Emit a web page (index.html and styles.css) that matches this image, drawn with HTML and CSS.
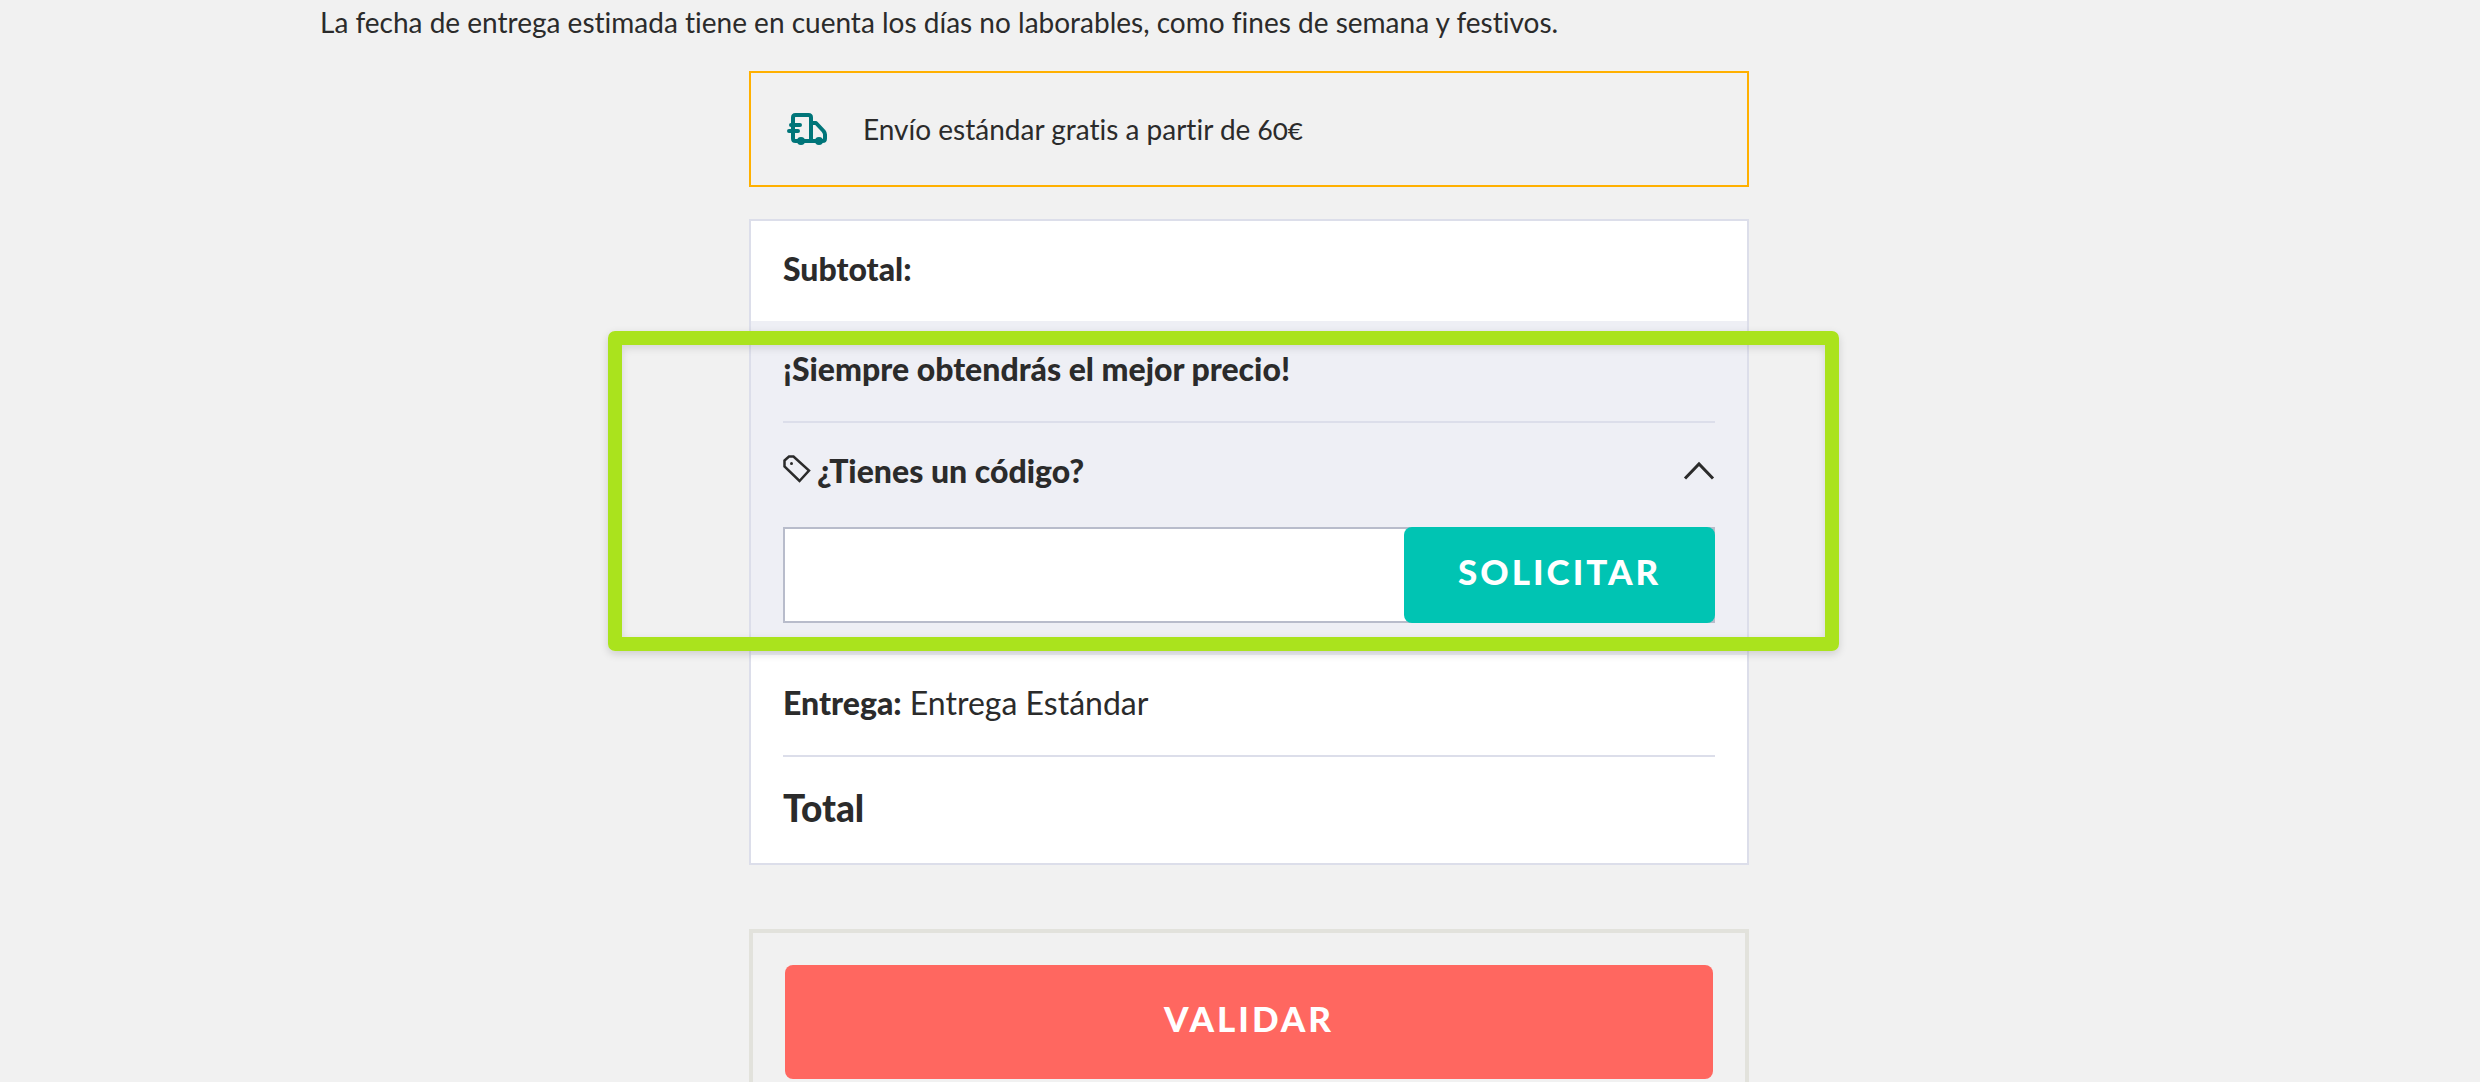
FILE: index.html
```html
<!DOCTYPE html>
<html lang="es">
<head>
	<meta charset="utf-8">
	<title>Resumen del pedido</title>
	<link rel="stylesheet" href="styles.css">
</head>
<body>
	<main class="page">
		<p class="note">La fecha de entrega estimada tiene en cuenta los días no laborables, como fines de semana y festivos.</p>
		<div class="column">
			<div class="shipping">
				<svg class="truck" viewBox="0 0 40 32" fill="none" stroke="#007579" stroke-width="4" stroke-linecap="round" stroke-linejoin="round" aria-hidden="true">
					<path d="M6 9V4.500Q6 2 8.500 2H21.500Q24 2 24 4.500V28H8.500Q6 28 6 25.500V9"/>
					<path d="M24 10H29L36.500 18Q38 20 38 21.500V25.500Q38 28 35.500 28H24"/>
					<path d="M4 12H13M2 18H11"/>
					<circle cx="14" cy="28" r="2"/>
					<circle cx="32" cy="28" r="2"/>
				</svg>
				<span>Envío estándar gratis a partir de 60€</span>
			</div>

			<form class="summary">
				<div class="row"><strong>Subtotal:</strong></div>
				<div class="promo">
					<div class="row line"><strong>¡Siempre obtendrás el mejor precio!</strong></div>
					<div class="promo-head">
						<svg class="tag" viewBox="0 0 28 28" fill="none" stroke="#2b2b2b" stroke-width="2.500" aria-hidden="true">
							<path d="M1.500 5.500L6 1.500H10.500L26 15.500L16.500 26L1.500 11.500Z"/>
							<circle cx="8.500" cy="8.500" r="1.500" fill="#2b2b2b" stroke="none"/>
						</svg>
						<label for="code">¿Tienes un código?</label>
						<button class="toggle" type="button" aria-label="Ocultar código">
							<svg viewBox="0 0 32 20" fill="none" stroke="#2b2b2b" stroke-width="3" aria-hidden="true"><path d="M2 17.500L16 3L30 17.500"/></svg>
						</button>
					</div>
					<div class="code">
						<input id="code" type="text">
						<button class="apply" type="button">SOLICITAR</button>
					</div>
					<div class="highlight"></div>
				</div>
				<div class="row line"><strong>Entrega:</strong>&nbsp;Entrega Estándar</div>
				<div class="row total"><strong>Total</strong></div>
			</form>

			<div class="checkout">
				<button class="validate" type="button">VALIDAR</button>
			</div>
		</div>
	</main>
</body>
</html>
```
FILE: styles.css
```css
*{box-sizing:border-box;margin:0;padding:0;}
body{background:#f1f1f1;color:#2b2b2b;font-family:"Lato",sans-serif;font-size:28px;line-height:40px;font-variant-ligatures:none;font-variant-numeric:oldstyle-nums;}
strong{font-weight:900;}
.page{height:100vh;overflow:hidden;padding:2px 302px 0 320px;}
.note{margin-bottom:29px;}
.column{max-width:1000px;margin:0 auto;}

/* aviso de envío */
.shipping{display:flex;align-items:center;gap:36px;height:116px;padding:0 36px;border:2px solid #ffb000;}
.truck{width:40px;height:32px;}

/* resumen */
.summary{margin-top:32px;border:2px solid #dcdeea;background:#fff;font-size:32px;}
.row{display:flex;align-items:center;height:100px;margin:0 32px;padding-bottom:4px;}
.line{height:102px;border-bottom:2px solid #dcdeea;}
.total{height:106px;font-size:37px;}
.promo{position:relative;padding-bottom:32px;background:#eeeff5;}
.promo-head{display:flex;align-items:center;height:104px;padding:0 32px 8px;font-weight:900;}
.tag{width:28px;height:28px;margin:0 6px 4px 0;}
.toggle{width:32px;height:20px;margin-left:auto;border:0;background:none;}
.toggle svg{display:block;width:32px;height:20px;}
.code{display:grid;grid-template-columns:2fr 1fr;height:96px;margin:0 32px;background:linear-gradient(90deg,#fff 80%,#b8bccb 80%);}
.code input{min-width:0;margin-right:-8px;padding:0 24px;border:2px solid #b8bccb;border-right:0;background:#fff;font:inherit;}
.apply,.validate{padding-bottom:8px;border:0;border-radius:8px;color:#fff;font-family:"Lato",sans-serif;font-size:35px;font-weight:900;letter-spacing:3px;}
.apply{position:relative;background:#00c4b3;}

/* recuadro verde sobre el bloque del código */
.highlight{position:absolute;top:10px;right:-92px;bottom:4px;left:-143px;border:14px solid #aae31d;border-radius:7px;box-shadow:0 3px 8px rgba(0,0,0,.15),inset 0 3px 8px rgba(0,0,0,.12);pointer-events:none;}

.checkout{margin-top:64px;padding:32px;border:4px solid #e2e2dc;}
.validate{display:block;width:100%;height:114px;background:#ff6760;}
```
